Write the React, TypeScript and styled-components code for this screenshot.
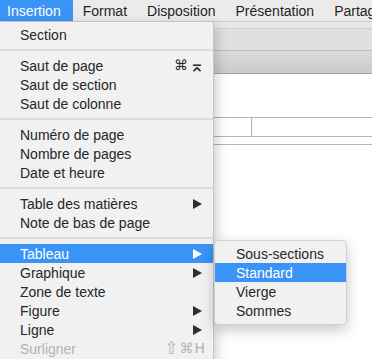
import React from "react";
import styled, { createGlobalStyle } from "styled-components";

const GlobalStyle = createGlobalStyle`
  html, body {
    margin: 0;
    padding: 0;
    overflow: hidden;
    background: #ffffff;
  }
  body {
    font-family: "Liberation Sans", "DejaVu Sans", sans-serif;
    -webkit-font-smoothing: antialiased;
  }
`;

const HIGHLIGHT = "#3a94f6";

// each key of a shortcut with the font size that makes its glyph match the mac look
type Key = { glyph: string; size: number };

type Item =
  | { kind: "sep" }
  | {
      kind: "item";
      label: string;
      shortcut?: Key[];
      submenu?: boolean;
      disabled?: boolean;
      active?: boolean;
    };

const item = (label: string, extra: Partial<Omit<Extract<Item, { kind: "item" }>, "kind" | "label">> = {}): Item => ({
  kind: "item",
  label,
  ...extra,
});
const sep: Item = { kind: "sep" };

const menuItems: Item[] = [
  item("Section"),
  sep,
  item("Saut de page", {
    shortcut: [
      { glyph: "⌘", size: 14 },
      { glyph: "⌅", size: 19 },
    ],
  }),
  item("Saut de section"),
  item("Saut de colonne"),
  sep,
  item("Numéro de page"),
  item("Nombre de pages"),
  item("Date et heure"),
  sep,
  item("Table des matières", { submenu: true }),
  item("Note de bas de page"),
  sep,
  item("Tableau", { submenu: true, active: true }),
  item("Graphique", { submenu: true }),
  item("Zone de texte"),
  item("Figure", { submenu: true }),
  item("Ligne", { submenu: true }),
  item("Surligner", {
    shortcut: [
      { glyph: "⇧", size: 17 },
      { glyph: "⌘", size: 14 },
      { glyph: "H", size: 14 },
    ],
    disabled: true,
  }),
];

const subItems = ["Sous-sections", "Standard", "Vierge", "Sommes"];

const Screen = styled.div`
  position: relative;
  width: 372px;
  height: 359px;
  overflow: hidden;
  display: flex;
  flex-direction: column;
`;

const MenuBar = styled.div`
  box-sizing: border-box;
  height: 22px;
  display: flex;
  align-items: stretch;
  background: #ebebeb;
  border-bottom: 1px solid #cdcdcd;
  white-space: nowrap;
  overflow: hidden;
`;

const BarItem = styled.div<{ $active?: boolean; $first?: boolean }>`
  display: flex;
  align-items: center;
  padding: 0 ${(p) => (p.$active ? 12 : 10)}px 0 ${(p) => (p.$first ? 7 : 10)}px;
  font-size: 14px;
  color: ${(p) => (p.$active ? "#ffffff" : "#232323")};
  background: ${(p) => (p.$active ? HIGHLIGHT : "transparent")};
`;

const Window = styled.div`
  flex: 1;
  display: flex;
  flex-direction: column;
`;

const TitleBand = styled.div`
  height: 6px;
  background: #e8e8e8;
  border-bottom: 1px solid #cfcfcf;
`;

const TabBand = styled.div`
  height: 21px;
  background: #e0e0e0;
  border-bottom: 1px solid #b9b9b9;
`;

const RulerBand = styled.div`
  height: 22px;
  background: linear-gradient(#dbdbdb, #cbcbcb);
  border-bottom: 1px solid #a3a3a3;
`;

const Document = styled.div`
  flex: 1;
  background: #ffffff;
  padding-top: 43px;
`;

const TableRow = styled.div`
  display: grid;
  grid-template-columns: 252px 1fr;
  height: 18px;
  border-top: 1px solid #aeb6ba;
  border-bottom: 1px solid #aeb6ba;
`;

const TableCell = styled.div`
  border-right: 1px solid #aeb6ba;
`;

const Rule = styled.div`
  margin-top: 7px;
  border-top: 1px solid #aeb6ba;
`;

const Dropdown = styled.div`
  position: absolute;
  top: 22px;
  left: 0;
  width: 213px;
  padding-top: 3px;
  padding-bottom: 8px;
  background: #f1f1f1;
  border-right: 1px solid #c6c6c6;
  box-shadow: 2px 4px 12px rgba(0, 0, 0, 0.22);
  z-index: 2;
`;

const Row = styled.div<{ $active?: boolean; $disabled?: boolean }>`
  position: relative;
  height: 19px;
  display: flex;
  align-items: center;
  justify-content: space-between;
  padding: 0 9px 0 20px;
  font-size: 14px;
  white-space: nowrap;
  color: ${(p) => (p.$active ? "#ffffff" : p.$disabled ? "#b3b3b3" : "#262626")};
  background: ${(p) => (p.$active ? HIGHLIGHT : "transparent")};
`;

const Separator = styled.div`
  height: 2px;
  margin: 5px 0;
  background: #dcdcdc;
`;

const Shortcut = styled.span`
  display: flex;
  align-items: center;
  gap: 1px;
  height: 19px;
  margin-right: -1px;
`;

const KeyGlyph = styled.span<{ $size: number }>`
  font-family: "DejaVu Sans", "Liberation Sans", sans-serif;
  font-size: ${(p) => p.$size}px;
  line-height: 19px;
`;

const Arrow = styled.svg<{ $active?: boolean }>`
  width: 9px;
  height: 10px;
  margin-right: 2px;
  fill: ${(p) => (p.$active ? "#ffffff" : "#2e2e2e")};
`;

const Submenu = styled.div`
  position: absolute;
  top: -4px;
  left: calc(100% + 1px);
  width: 133px;
  box-sizing: border-box;
  padding: 3px 0 4px;
  background: #f1f1f1;
  border: 1px solid rgba(0, 0, 0, 0.14);
  border-radius: 5px;
  box-shadow: 0 5px 14px rgba(0, 0, 0, 0.22);
`;

const SubRow = styled.div<{ $active?: boolean }>`
  height: 19px;
  display: flex;
  align-items: center;
  padding-left: 21px;
  font-size: 14px;
  color: ${(p) => (p.$active ? "#ffffff" : "#262626")};
  background: ${(p) => (p.$active ? HIGHLIGHT : "transparent")};
`;

const Triangle: React.FC<{ active?: boolean }> = ({ active }) => (
  <Arrow $active={active} viewBox="0 0 9 10">
    <polygon points="0,0 9,5 0,10" />
  </Arrow>
);

const App: React.FC = () => {
  return (
    <Screen>
      <GlobalStyle />
      <MenuBar>
        <BarItem $first $active>
          Insertion
        </BarItem>
        <BarItem>Format</BarItem>
        <BarItem>Disposition</BarItem>
        <BarItem>Présentation</BarItem>
        <BarItem>Partager</BarItem>
      </MenuBar>

      <Window>
        <TitleBand />
        <TabBand />
        <RulerBand />
        <Document>
          <TableRow>
            <TableCell />
            <div />
          </TableRow>
          <Rule />
        </Document>
      </Window>

      <Dropdown>
        {menuItems.map((it, i) =>
          it.kind === "sep" ? (
            <Separator key={i} />
          ) : (
            <Row key={i} $active={it.active} $disabled={it.disabled}>
              <span>{it.label}</span>
              {it.shortcut && (
                <Shortcut>
                  {it.shortcut.map((k) => (
                    <KeyGlyph key={k.glyph} $size={k.size}>
                      {k.glyph}
                    </KeyGlyph>
                  ))}
                </Shortcut>
              )}
              {it.submenu && <Triangle active={it.active} />}
              {it.active && (
                <Submenu>
                  {subItems.map((s) => (
                    <SubRow key={s} $active={s === "Standard"}>
                      {s}
                    </SubRow>
                  ))}
                </Submenu>
              )}
            </Row>
          )
        )}
      </Dropdown>
    </Screen>
  );
};

export default App;
